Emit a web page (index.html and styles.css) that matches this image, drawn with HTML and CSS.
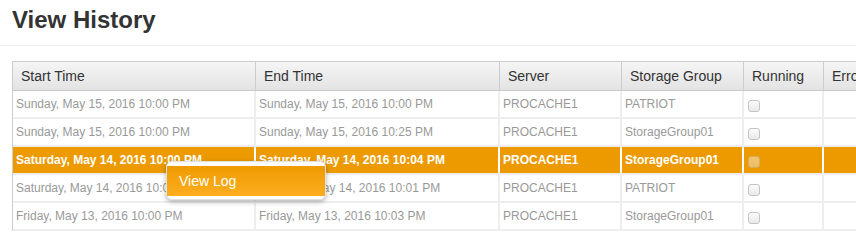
FILE: index.html
```html
<!DOCTYPE html>
<html>
<head>
<meta charset="utf-8">
<link rel="stylesheet" href="styles.css">
</head>
<body>
<div class="page">
  <header class="page-head">
    <h1 class="title">View History</h1>
  </header>
  <div class="grid-wrap">
    <table class="grid">
      <colgroup>
        <col class="c-start">
        <col class="c-end">
        <col class="c-server">
        <col class="c-group">
        <col class="c-run">
        <col class="c-err">
      </colgroup>
      <thead>
        <tr>
          <th>Start Time</th>
          <th>End Time</th>
          <th>Server</th>
          <th>Storage Group</th>
          <th>Running</th>
          <th>Error</th>
        </tr>
      </thead>
      <tbody>
        <tr>
          <td>Sunday, May 15, 2016 10:00 PM</td>
          <td>Sunday, May 15, 2016 10:00 PM</td>
          <td>PROCACHE1</td>
          <td>PATRIOT</td>
          <td><span class="check"></span></td>
          <td></td>
        </tr>
        <tr>
          <td>Sunday, May 15, 2016 10:00 PM</td>
          <td>Sunday, May 15, 2016 10:25 PM</td>
          <td>PROCACHE1</td>
          <td>StorageGroup01</td>
          <td><span class="check"></span></td>
          <td></td>
        </tr>
        <tr class="selected">
          <td>Saturday, May 14, 2016 10:00 PM</td>
          <td>Saturday, May 14, 2016 10:04 PM</td>
          <td>PROCACHE1</td>
          <td>StorageGroup01</td>
          <td><span class="check"></span></td>
          <td></td>
        </tr>
        <tr>
          <td>Saturday, May 14, 2016 10:00 PM</td>
          <td>Saturday, May 14, 2016 10:01 PM</td>
          <td>PROCACHE1</td>
          <td>PATRIOT</td>
          <td><span class="check"></span></td>
          <td></td>
        </tr>
        <tr>
          <td>Friday, May 13, 2016 10:00 PM</td>
          <td>Friday, May 13, 2016 10:03 PM</td>
          <td>PROCACHE1</td>
          <td>StorageGroup01</td>
          <td><span class="check"></span></td>
          <td></td>
        </tr>
      </tbody>
    </table>
    <ul class="context-menu">
      <li class="menu-item">View Log</li>
    </ul>
  </div>
</div>
</body>
</html>
```
FILE: styles.css
```css
html, body {
  margin: 0;
  padding: 0;
  background: #fff;
  overflow: hidden;
}
body {
  font-family: "Liberation Sans", Arial, sans-serif;
  color: #333;
  width: 856px;
  height: 233px;
}
.page-head {
  padding: 6px 0 11px 12px;
  border-bottom: 1px solid #eee;
}
.title {
  margin: 0;
  font-size: 24px;
  line-height: 28px;
  font-weight: bold;
  color: #333;
}
.grid-wrap {
  position: relative;
  margin: 15px 0 0 12px;
}
.grid {
  table-layout: fixed;
  width: 893px;
  border-collapse: separate;
  border-spacing: 0;
  border-left: 1px solid #ccc;
  border-top: 1px solid #ccc;
}
.c-start { width: 243px; }
.c-end { width: 244px; }
.c-server { width: 122px; }
.c-group { width: 122px; }
.c-run { width: 80px; }
.c-err { width: 81px; }

.grid th {
  text-align: left;
  font-weight: normal;
  font-size: 14px;
  line-height: 28px;
  padding: 0 0 0 8px;
  color: #333;
  background: linear-gradient(#f5f5f5, #e3e3e3);
  border-right: 1px solid #ccc;
  border-bottom: 1px solid #c8c8c8;
  white-space: nowrap;
  overflow: hidden;
}
.grid td {
  font-size: 12px;
  line-height: 26px;
  padding: 0 0 0 3px;
  color: #999;
  border-right: 2px solid #eee;
  border-bottom: 2px solid #eee;
  white-space: nowrap;
  overflow: hidden;
}
.grid tr.selected td {
  background: #ec9a00;
  color: #fff;
  font-weight: bold;
  border-right-color: #fff;
  border-bottom-color: #eee;
}
.check {
  display: inline-block;
  box-sizing: border-box;
  width: 12px;
  height: 12px;
  margin-left: 1px;
  vertical-align: -4px;
  border: 1px solid #c4c4c4;
  border-radius: 3px;
  background: linear-gradient(#fcfcfc, #e9e9e9);
}
.selected .check {
  opacity: 0.45;
}
.context-menu {
  position: absolute;
  left: 154px;
  top: 100px;
  width: 158px;
  margin: 0;
  padding: 4px 0 3px;
  list-style: none;
  background: #fff;
  border: 1px solid #e2e2e2;
  border-radius: 6px;
  box-shadow: 0 2px 5px rgba(0, 0, 0, 0.3);
}
.menu-item {
  font-size: 14px;
  line-height: 30px;
  padding-left: 12px;
  color: #fff;
  background: linear-gradient(#ee9a00, #fdae1f);
}
```
